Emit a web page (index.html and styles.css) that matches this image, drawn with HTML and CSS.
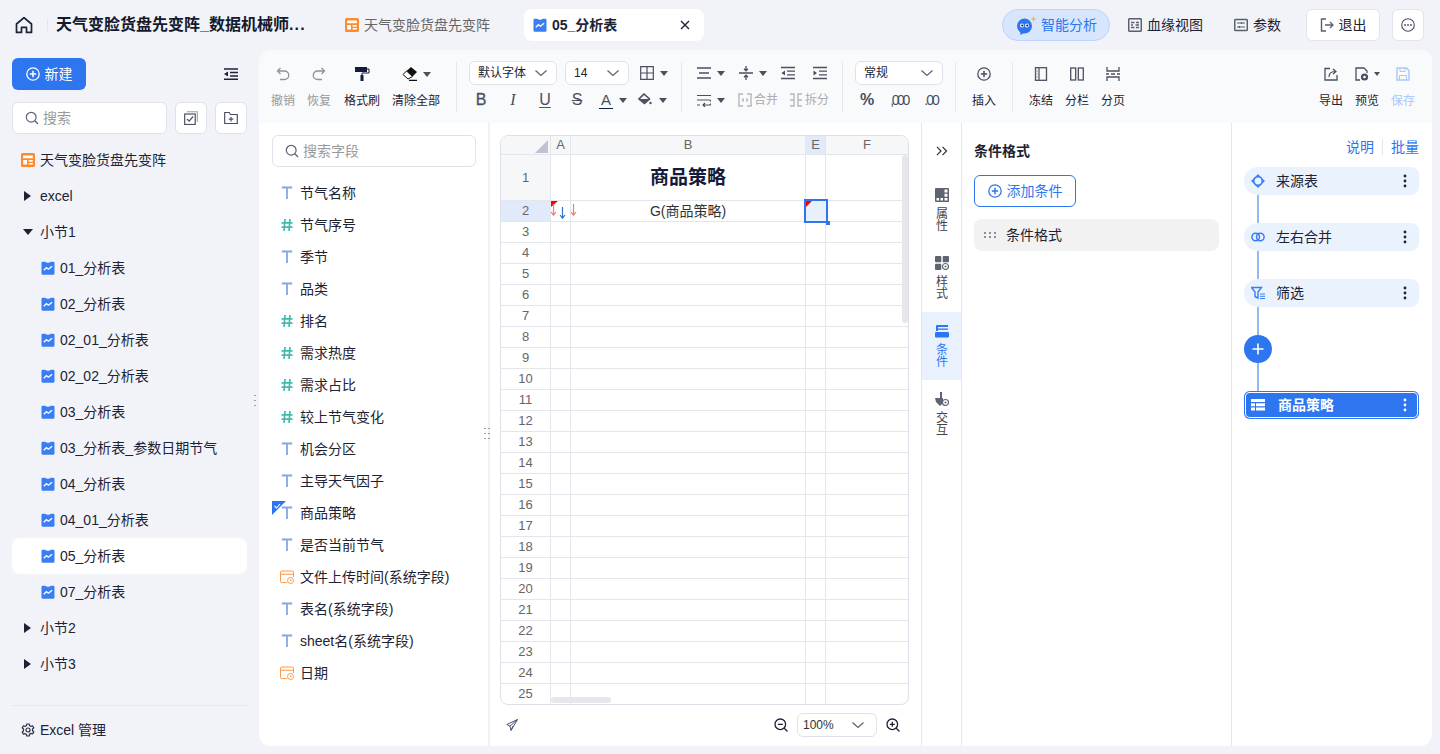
FILE: index.html
```html
<!DOCTYPE html>
<html lang="zh-CN">
<head>
<meta charset="utf-8">
<title>05_分析表</title>
<link rel="stylesheet" href="styles.css">
</head>
<body>
<svg class="defs" width="0" height="0" aria-hidden="true">
  <symbol id="i-report" viewBox="0 0 14 14"><path d="M1.800.8h2.400a3 1.300 0 0 0 5.600 0h2.400a1.300 1.300 0 0 1 1.300 1.300v10.400a1.300 1.300 0 0 1-1.300 1.300H1.800a1.300 1.300 0 0 1-1.300-1.300V2.100A1.300 1.300 0 0 1 1.800.8z" fill="#3b7df2"/><path d="M2.800 9.200l2.600-2.500 2 1.500 3.700-3" fill="none" stroke="#fff" stroke-width="1.300"/></symbol>
  <symbol id="i-pivot" viewBox="0 0 14 14"><rect width="14" height="14" rx="1.600" fill="#ff8a2b"/><path d="M2.200 2.400h9.600v2.800H2.200zM2.200 7h3.800v4.600H2.200zM7.600 7h4.200v1.700H7.600zM7.600 9.900h4.200v1.700H7.600z" fill="#fff"/></symbol>
  <symbol id="i-t" viewBox="0 0 12 14"><path d="M.8 1.500h10.400M6 1.500v11.500" fill="none" stroke="#84a7e6" stroke-width="1.800"/></symbol>
  <symbol id="i-hash" viewBox="0 0 12 14"><path d="M4 1L3 13M9 1L8 13M.5 4.800h11M.5 9.200h11" fill="none" stroke="#42bba9" stroke-width="1.700"/></symbol>
  <symbol id="i-date" viewBox="0 0 14 14"><path d="M7 12.500H1.500a1 1 0 0 1-1-1V2a1 1 0 0 1 1-1h11a1 1 0 0 1 1 1v5M.5 4.300h13" fill="none" stroke="#ff9a4a" stroke-width="1"/><circle cx="10.500" cy="10.500" r="3" fill="#fff" stroke="#ff9a4a"/><path d="M10.500 9v1.600h1.300" fill="none" stroke="#ff9a4a" stroke-width=".9"/></symbol>
  <symbol id="i-search" viewBox="0 0 14 14"><circle cx="6.200" cy="6.200" r="4.900" fill="none" stroke="#5b6272" stroke-width="1.200"/><path d="M9.800 9.800L13 13" stroke="#5b6272" stroke-width="1.300"/></symbol>
  <symbol id="i-plus" viewBox="0 0 14 14"><circle cx="7" cy="7" r="6.200" fill="none" stroke="currentColor" stroke-width="1.300"/><path d="M7 3.800v6.400M3.800 7h6.400" stroke="currentColor" stroke-width="1.500"/></symbol>
  <symbol id="i-chev" viewBox="0 0 14 8"><path d="M1.500 1.500L7 6.500l5.500-5" fill="none" stroke="#5b6272" stroke-width="1.200"/></symbol>
  <symbol id="i-dots" viewBox="0 0 4 14"><circle cx="2" cy="2" r="1.400"/><circle cx="2" cy="7" r="1.400"/><circle cx="2" cy="12" r="1.400"/></symbol>
  <symbol id="i-darrow" viewBox="0 0 7 14"><path d="M3.500 1v11M1 9l2.500 3.200L6 9" fill="none" stroke="currentColor" stroke-width="1.200"/></symbol>
</svg>

<header class="topbar">
  <svg class="home" viewBox="0 0 18 18"><path d="M1.500 8L9 1.600 16.500 8v8.400h-5v-5h-5v5h-5z" fill="none" stroke="#1c2233" stroke-width="1.700" stroke-linejoin="round"/></svg>
  <span class="top-div"></span>
  <div class="doc-title">天气变脸货盘先变阵_数据机械师<span class="dots">...</span></div>
  <div class="tab"><svg class="ic14"><use href="#i-pivot"/></svg><span>天气变脸货盘先变阵</span></div>
  <div class="tab tab-on"><svg class="ic14"><use href="#i-report"/></svg><b>05_分析表</b><svg class="tab-x" viewBox="0 0 10 10"><path d="M1 1l8 8M9 1l-8 8" stroke="#1c2233" stroke-width="1.400"/></svg></div>
  <div class="top-right">
    <div class="ai-pill">
      <svg class="ai-ic" viewBox="0 0 21 19"><circle cx="8.500" cy="10" r="7.500" fill="#2e75f0"/><path d="M4 14l.5 5 5-3z" fill="#2e75f0"/><circle cx="6" cy="9.500" r="2" fill="#fff"/><circle cx="11" cy="9.500" r="2" fill="#fff"/><circle cx="6.300" cy="9.500" r="1.100" fill="#123"/><circle cx="11.300" cy="9.500" r="1.100" fill="#123"/><path d="M17.500 0l.8 2.200 2.200.8-2.200.8-.8 2.200-.8-2.200-2.200-.8 2.200-.8z" fill="#f7b23b"/></svg>
      <span>智能分析</span>
    </div>
    <div class="top-link link-a"><svg class="ic14" viewBox="0 0 14 14"><rect x=".7" y=".7" width="12.600" height="12.600" rx="1" fill="none" stroke="#5a5f6c" stroke-width="1.500"/><path d="M3 4.500h3.500M8 4.500h3M3 7h2M7.500 7H11M3 9.500h3.500M8 9.500h3" stroke="#5a5f6c" stroke-width="1.300"/></svg><span>血缘视图</span></div>
    <div class="top-link link-b"><svg class="ic14" viewBox="0 0 14 14"><rect x=".7" y="1.500" width="12.600" height="11" rx="1" fill="none" stroke="#5a5f6c" stroke-width="1.500"/><path d="M3 5h8M3 9h8" stroke="#5a5f6c" stroke-width="1.200"/><path d="M7.500 4v2M5.500 8v2" stroke="#5a5f6c" stroke-width="1.200"/></svg><span>参数</span></div>
    <div class="exit-btn"><svg class="ic14" viewBox="0 0 14 14"><path d="M6 1H1.500v12H6" fill="none" stroke="#5a5f6c" stroke-width="1.400"/><path d="M5 7h8M10 4l3 3-3 3" fill="none" stroke="#5a5f6c" stroke-width="1.300"/></svg><span>退出</span></div>
    <div class="more-btn"><svg class="ic14" viewBox="0 0 14 14"><circle cx="7" cy="7" r="6.300" fill="none" stroke="#4a5060" stroke-width="1.100"/><circle cx="4" cy="7" r=".9" fill="#4a5060"/><circle cx="7" cy="7" r=".9" fill="#4a5060"/><circle cx="10" cy="7" r=".9" fill="#4a5060"/></svg></div>
  </div>
</header>

<div class="workspace">
  <aside class="sidebar">
    <div class="side-top">
      <button class="new-btn"><svg class="ic14"><use href="#i-plus"/></svg>新建</button>
      <svg class="collapse" viewBox="0 0 14 12"><path d="M0 1h14M6 4.500h8M6 8h8M0 11.200h14" stroke="#1c2233" stroke-width="1.500"/><path d="M4 3.500v5L0 6z" fill="#1c2233"/></svg>
    </div>
    <div class="side-search">
      <div class="search-box s-side"><svg class="ic14"><use href="#i-search"/></svg><span>搜索</span></div>
      <div class="square-btn"><svg class="ic14" viewBox="0 0 14 14"><rect x=".7" y="3" width="10.500" height="10.500" fill="none" stroke="#4a5060" stroke-width="1.200"/><path d="M3 .7h10.300V11" fill="none" stroke="#9aa0ad" stroke-width="1.100"/><path d="M3 8l2.200 2.200L9 5.500" fill="none" stroke="#4a5060" stroke-width="1.200"/></svg></div>
      <div class="square-btn"><svg class="ic14" viewBox="0 0 14 14"><path d="M.7 1.500h4.500l1.300 2h6.800v9H.7z" fill="none" stroke="#4a5060" stroke-width="1.200"/><path d="M7 6v4.500M4.800 8.200h4.500" stroke="#4a5060" stroke-width="1.200"/></svg></div>
    </div>
    <nav class="tree">
      <div class="t-row"><svg class="ic14 root-ic"><use href="#i-pivot"/></svg>天气变脸货盘先变阵</div>
      <div class="t-row"><i class="tri-r"></i>excel</div>
      <div class="t-row"><i class="tri-d"></i>小节1</div>
      <div class="t-row t-leaf"><svg class="ic14"><use href="#i-report"/></svg>01_分析表</div>
      <div class="t-row t-leaf"><svg class="ic14"><use href="#i-report"/></svg>02_分析表</div>
      <div class="t-row t-leaf"><svg class="ic14"><use href="#i-report"/></svg>02_01_分析表</div>
      <div class="t-row t-leaf"><svg class="ic14"><use href="#i-report"/></svg>02_02_分析表</div>
      <div class="t-row t-leaf"><svg class="ic14"><use href="#i-report"/></svg>03_分析表</div>
      <div class="t-row t-leaf"><svg class="ic14"><use href="#i-report"/></svg>03_分析表_参数日期节气</div>
      <div class="t-row t-leaf"><svg class="ic14"><use href="#i-report"/></svg>04_分析表</div>
      <div class="t-row t-leaf"><svg class="ic14"><use href="#i-report"/></svg>04_01_分析表</div>
      <div class="t-row t-leaf t-on"><svg class="ic14"><use href="#i-report"/></svg>05_分析表</div>
      <div class="t-row t-leaf"><svg class="ic14"><use href="#i-report"/></svg>07_分析表</div>
      <div class="t-row"><i class="tri-r"></i>小节2</div>
      <div class="t-row"><i class="tri-r"></i>小节3</div>
    </nav>
    <div class="side-foot"><svg class="ic14" viewBox="0 0 14 14"><path d="M5.800 1h2.400l.4 1.700 1.300.7 1.700-.5 1.200 2-1.300 1.200v1.600l1.300 1.200-1.200 2-1.700-.5-1.300.7L8.200 13H5.800l-.4-1.700-1.300-.7-1.700.5-1.200-2L2.500 7.900V6.100L1.200 4.900l1.200-2 1.700.5 1.300-.7z" fill="none" stroke="#2a3040" stroke-width="1.200"/><circle cx="7" cy="7" r="2" fill="none" stroke="#2a3040" stroke-width="1.200"/></svg>Excel 管理</div>
    <span class="side-grip"></span>
  </aside>

  <main class="card">
    <div class="toolbar">
      <div class="tb-tool w24 off"><svg class="tb-ic" viewBox="0 0 14 14"><path d="M4.500 1L1.500 4l3 3M1.500 4h7a4 4 0 0 1 0 8.500H4" fill="none" stroke="#8d93a0" stroke-width="1.300"/></svg><span>撤销</span></div>
      <div class="tb-tool w24 off ml12"><svg class="tb-ic" viewBox="0 0 14 14"><path d="M9.500 1l3 3-3 3M12.500 4h-7a4 4 0 0 0 0 8.500H10" fill="none" stroke="#8d93a0" stroke-width="1.300"/></svg><span>恢复</span></div>
      <div class="tb-tool w36 ml13"><svg class="tb-ic" viewBox="0 0 16 14"><path d="M1 0h12v5H1z" fill="#141b3c"/><path d="M13 2h2v4H8v2" fill="none" stroke="#141b3c"/><path d="M6.500 8h3v6h-3z" fill="#141b3c"/></svg><span>格式刷</span></div>
      <div class="tb-tool w48 ml12"><div class="tb-ic-row"><svg class="tb-ic" viewBox="0 0 16 14"><path d="M9 0l6 5-4.500 4.500-6-5.500z" fill="#111"/><path d="M4.500 4L1 7.500l5 4.500 4.500-2.500z" fill="#fff" stroke="#111"/><path d="M7 13.300h8" stroke="#111" stroke-width="1.200"/></svg><i class="caret"></i></div><span>清除全部</span></div>
      <span class="sep s16"></span>

      <div class="tb-col g-font">
        <div class="tb-line">
          <div class="select sel-font"><span>默认字体</span><svg class="sel-chev"><use href="#i-chev"/></svg></div>
          <div class="select sel-size"><span>14</span><svg class="sel-chev"><use href="#i-chev"/></svg></div>
          <div class="icn grid-ic"><svg class="ic14" viewBox="0 0 14 14"><path d="M.7.700h12.600v12.600H.7zM7 .7v12.600M.7 7h12.600" fill="none" stroke="#4a5060" stroke-width="1.200"/></svg><i class="caret"></i></div>
        </div>
        <div class="tb-line line-2">
          <span class="fmt fmt-b">B</span><span class="fmt fmt-i">I</span><span class="fmt fmt-u">U</span><span class="fmt fmt-s">S</span>
          <div class="icn col-a"><span class="a-ic">A</span><i class="caret"></i></div>
          <div class="icn col-f"><svg class="ic14" viewBox="0 0 14 14"><path d="M6 1l5.500 5-5 4.500L1 6z" fill="none" stroke="#4a5060" stroke-width="1.600"/><path d="M1.500 6h9.500L6.500 10.500z" fill="#4a5060"/><circle cx="12.500" cy="10" r="1.200" fill="#4a5060"/></svg><i class="caret"></i></div>
        </div>
      </div>
      <span class="sep s12"></span>

      <div class="tb-col g-align">
        <div class="tb-line">
          <div class="icn i-a"><svg class="ic14" viewBox="0 0 14 14"><path d="M0 2h14M2 7h10M0 12h14" stroke="#4a5060" stroke-width="1.300"/></svg><i class="caret"></i></div>
          <div class="icn i-b"><svg class="ic14" viewBox="0 0 14 14"><path d="M0 7h14M7 0v4.500M7 9.500V14M5 2.800l2 2 2-2M5 11.200l2-2 2 2" fill="none" stroke="#4a5060" stroke-width="1.300"/></svg><i class="caret"></i></div>
          <svg class="ic14 i-c" viewBox="0 0 14 14"><path d="M0 1.500h14M6 5.200h8M6 8.800h8M0 12.500h14" stroke="#4a5060" stroke-width="1.300"/><path d="M4 4.500v5L.5 7z" fill="#4a5060"/></svg>
          <svg class="ic14 i-d" viewBox="0 0 14 14"><path d="M0 1.500h14M6 5.200h8M6 8.800h8M0 12.500h14" stroke="#4a5060" stroke-width="1.300"/><path d="M.5 4.500v5L4 7z" fill="#4a5060"/></svg>
        </div>
        <div class="tb-line line-2">
          <div class="icn i-a"><svg class="ic14" viewBox="0 0 14 14"><path d="M0 2.500h14M0 7h12a2.500 2.500 0 0 1 0 5H6M8 10l-2 2 2 2M0 12h3" fill="none" stroke="#4a5060" stroke-width="1.200"/></svg><i class="caret"></i></div>
          <div class="merge m-a"><svg class="ic14" viewBox="0 0 14 14"><path d="M5 1H1v12h4M9 1h4v12H9M4 7h2M8 7h2" fill="none" stroke="#b3b7c0" stroke-width="1.400"/><path d="M5 5v4M9 5v4" stroke="#b3b7c0"/></svg><span>合并</span></div>
          <div class="merge m-b"><svg class="ic14" viewBox="0 0 14 14"><path d="M1 1h4v12H1M13 1H9v12h4M1 7h4M9 7h4" fill="none" stroke="#b3b7c0" stroke-width="1.400"/></svg><span>拆分</span></div>
        </div>
      </div>
      <span class="sep s12"></span>

      <div class="tb-col g-num">
        <div class="tb-line">
          <div class="select sel-num"><span>常规</span><svg class="sel-chev"><use href="#i-chev"/></svg></div>
        </div>
        <div class="tb-line line-2">
          <span class="num-ic big">%</span><span class="num-ic">,000</span><span class="num-ic">.00</span>
        </div>
      </div>
      <span class="sep s12"></span>

      <div class="tb-tool w24 ml4"><svg class="tb-ic" viewBox="0 0 14 14" color="#4a5060"><use href="#i-plus"/></svg><span>插入</span></div>
      <span class="sep s16"></span>

      <div class="tb-tool w24 ml4"><svg class="tb-ic" viewBox="0 0 14 14"><rect x="1.500" y=".7" width="11" height="12.600" fill="none" stroke="#4a5060" stroke-width="1.300"/><path d="M5 .7v12.600" stroke="#4a5060" stroke-width="1.200"/><path d="M1.500 4h3M1.500 7h3M1.500 10h3" stroke="#9aa0ad"/></svg><span>冻结</span></div>
      <div class="tb-tool w24 ml12"><svg class="tb-ic" viewBox="0 0 14 14"><rect x=".7" y="1" width="5" height="12" fill="none" stroke="#4a5060" stroke-width="1.300"/><rect x="8.300" y="1" width="5" height="12" fill="none" stroke="#4a5060" stroke-width="1.300"/></svg><span>分栏</span></div>
      <div class="tb-tool w24 ml12"><svg class="tb-ic" viewBox="0 0 14 14"><path d="M1 0v4h12V0M1 14v-4h12v4M0 7h3M5 7h4M11 7h3" fill="none" stroke="#4a5060" stroke-width="1.300"/></svg><span>分页</span></div>

      <div class="tb-end">
        <div class="tb-tool w24"><svg class="tb-ic" viewBox="0 0 14 14"><path d="M6 1.500H1v11.500h12V8" fill="none" stroke="#4a5060" stroke-width="1.300"/><path d="M5 10c0-4 2-5.500 6-5.500M9 2l3 2.500L9 7" fill="none" stroke="#4a5060" stroke-width="1.200"/></svg><span>导出</span></div>
        <div class="tb-tool w24 ml12"><div class="tb-ic-row tight"><svg class="tb-ic" viewBox="0 0 14 14"><path d="M5 13H1V1h8l3 3v2" fill="none" stroke="#4a5060" stroke-width="1.300"/><circle cx="9.500" cy="10" r="3.600" fill="#4a5060"/><circle cx="9.500" cy="10" r="1.300" fill="#fff"/></svg><i class="caret small"></i></div><span>预览</span></div>
        <div class="tb-tool w24 ml12 save"><svg class="tb-ic" viewBox="0 0 14 14"><path d="M1 1h9.500L13 3.500V13H1z" fill="none" stroke="#a9c6f7" stroke-width="1.400"/><path d="M4 1v3.500h5V1M3.500 13V8.500h7V13" fill="none" stroke="#a9c6f7"/></svg><span>保存</span></div>
      </div>
    </div>

    <div class="content">
      <section class="fields">
        <div class="search-box s-field"><svg class="ic14"><use href="#i-search"/></svg><span>搜索字段</span></div>
        <ul class="f-list">
          <li><svg class="f-ic"><use href="#i-t"/></svg>节气名称</li>
          <li><svg class="f-ic"><use href="#i-hash"/></svg>节气序号</li>
          <li><svg class="f-ic"><use href="#i-t"/></svg>季节</li>
          <li><svg class="f-ic"><use href="#i-t"/></svg>品类</li>
          <li><svg class="f-ic"><use href="#i-hash"/></svg>排名</li>
          <li><svg class="f-ic"><use href="#i-hash"/></svg>需求热度</li>
          <li><svg class="f-ic"><use href="#i-hash"/></svg>需求占比</li>
          <li><svg class="f-ic"><use href="#i-hash"/></svg>较上节气变化</li>
          <li><svg class="f-ic"><use href="#i-t"/></svg>机会分区</li>
          <li><svg class="f-ic"><use href="#i-t"/></svg>主导天气因子</li>
          <li class="f-used"><svg class="used-mark" viewBox="0 0 14 14"><path d="M0 0h14L0 14z" fill="#2e75f0"/><path d="M2.500 5l2 2 3.500-4" fill="none" stroke="#fff" stroke-width="1.100"/></svg><svg class="f-ic"><use href="#i-t"/></svg>商品策略</li>
          <li><svg class="f-ic"><use href="#i-t"/></svg>是否当前节气</li>
          <li><svg class="f-ic d"><use href="#i-date"/></svg>文件上传时间(系统字段)</li>
          <li><svg class="f-ic"><use href="#i-t"/></svg>表名(系统字段)</li>
          <li><svg class="f-ic"><use href="#i-t"/></svg>sheet名(系统字段)</li>
          <li><svg class="f-ic d"><use href="#i-date"/></svg>日期</li>
        </ul>
        <span class="field-grip"></span>
      </section>

      <section class="sheet-area">
        <div class="sheet">
          <table class="tbl">
            <colgroup><col class="c-h"><col class="c-a"><col class="c-b"><col class="c-e"><col class="c-f"></colgroup>
            <tr class="r-head"><th class="corner"><i class="corner-tri"></i></th><th>A</th><th>B</th><th class="hl">E</th><th>F</th></tr>
            <tr class="r-one"><th class="rh">1</th><td></td><td class="title-cell">商品策略</td><td></td><td></td></tr>
            <tr><th class="hl">2</th><td class="rel"><i class="flag"></i><svg class="arr a1"><use href="#i-darrow"/></svg><svg class="arr a2"><use href="#i-darrow"/></svg></td><td class="rel center"><svg class="arr a3"><use href="#i-darrow"/></svg>G(商品策略)</td><td class="rel"><div class="sel-cell"><i class="flag2"></i><i class="handle"></i></div></td><td></td></tr>
            <tr><th>3</th><td></td><td></td><td></td><td></td></tr>
            <tr><th>4</th><td></td><td></td><td></td><td></td></tr>
            <tr><th>5</th><td></td><td></td><td></td><td></td></tr>
            <tr><th>6</th><td></td><td></td><td></td><td></td></tr>
            <tr><th>7</th><td></td><td></td><td></td><td></td></tr>
            <tr><th>8</th><td></td><td></td><td></td><td></td></tr>
            <tr><th>9</th><td></td><td></td><td></td><td></td></tr>
            <tr><th>10</th><td></td><td></td><td></td><td></td></tr>
            <tr><th>11</th><td></td><td></td><td></td><td></td></tr>
            <tr><th>12</th><td></td><td></td><td></td><td></td></tr>
            <tr><th>13</th><td></td><td></td><td></td><td></td></tr>
            <tr><th>14</th><td></td><td></td><td></td><td></td></tr>
            <tr><th>15</th><td></td><td></td><td></td><td></td></tr>
            <tr><th>16</th><td></td><td></td><td></td><td></td></tr>
            <tr><th>17</th><td></td><td></td><td></td><td></td></tr>
            <tr><th>18</th><td></td><td></td><td></td><td></td></tr>
            <tr><th>19</th><td></td><td></td><td></td><td></td></tr>
            <tr><th>20</th><td></td><td></td><td></td><td></td></tr>
            <tr><th>21</th><td></td><td></td><td></td><td></td></tr>
            <tr><th>22</th><td></td><td></td><td></td><td></td></tr>
            <tr><th>23</th><td></td><td></td><td></td><td></td></tr>
            <tr><th>24</th><td></td><td></td><td></td><td></td></tr>
            <tr><th>25</th><td></td><td></td><td></td><td></td></tr>
          </table>
          <i class="scroll-v"></i>
          <i class="scroll-h"></i>
        </div>
        <div class="zoombar">
          <svg class="plane" viewBox="0 0 12 12"><path d="M11.500.5L.8 5.500l3.200 1.600L5 11.500zM11.500.5L4 7.100M5 11.500L7 7" fill="none" stroke="#4a5274" stroke-width="1"/></svg>
          <svg class="ic14 z-out" viewBox="0 0 14 14"><circle cx="6.300" cy="6.300" r="5.300" fill="none" stroke="#1c2233" stroke-width="1.300"/><path d="M10 10l3.500 3.500M3.800 6.300h5" stroke="#1c2233" stroke-width="1.300"/></svg>
          <div class="select sel-zoom"><span>100%</span><svg class="sel-chev"><use href="#i-chev"/></svg></div>
          <svg class="ic14 z-in" viewBox="0 0 14 14"><circle cx="6.300" cy="6.300" r="5.300" fill="none" stroke="#1c2233" stroke-width="1.300"/><path d="M10 10l3.500 3.500M3.800 6.300h5M6.300 3.800v5" stroke="#1c2233" stroke-width="1.300"/></svg>
        </div>
      </section>

      <nav class="vtabs">
        <div class="v-collapse"><svg viewBox="0 0 12 10" class="v-chev"><path d="M1 .8L5 5 1 9.200M6.500.8L10.500 5l-4 4.200" fill="none" stroke="#2a3040" stroke-width="1.200"/></svg></div>
        <div class="v-tab"><svg class="ic14" viewBox="0 0 14 14"><rect width="14" height="14" rx="1" fill="#5f6471"/><path d="M9.500 1.500h3v3h-3zM9.500 5.800h3v3h-3zM1.500 10h2.500v2.500H1.500zM5.500 10h2.500v2.500H5.500zM9.500 10h3v2.500h-3z" fill="#fff"/></svg><span>属性</span></div>
        <div class="v-tab"><svg class="ic14" viewBox="0 0 14 14"><rect width="6.300" height="6.300" rx="1" fill="#5f6471"/><rect x="7.700" width="6.300" height="6.300" rx="1" fill="#5f6471"/><rect y="7.700" width="6.300" height="6.300" rx="1" fill="#5f6471"/><circle cx="10.500" cy="10.500" r="3" fill="#fff" stroke="#5f6471" stroke-width="1.200"/><circle cx="10.500" cy="10.500" r="1" fill="#5f6471"/></svg><span>样式</span></div>
        <div class="v-tab v-on"><svg class="ic14" viewBox="0 0 14 14"><path d="M6 1H2a1 1 0 0 0-1 1v5h2V3h10V1z" fill="#2e75f0"/><rect x="3" y="4.500" width="10" height="1.300" fill="#2e75f0"/><rect x="0" y="8" width="14" height="5.500" rx="1.200" fill="#2e75f0"/></svg><span>条件</span></div>
        <div class="v-tab"><svg class="ic14" viewBox="0 0 14 14"><path d="M5 0h2v6h-2zM0 6h8v5l-3 3-4-4z" fill="#5f6471"/><circle cx="10.500" cy="10.500" r="3" fill="#fff" stroke="#5f6471" stroke-width="1.100"/><circle cx="10.500" cy="10.500" r="1" fill="#5f6471"/></svg><span>交互</span></div>
      </nav>

      <section class="cond">
        <h3 class="cond-title">条件格式</h3>
        <button class="add-cond"><svg class="ic14"><use href="#i-plus"/></svg>添加条件</button>
        <div class="cond-row"><svg class="grip" viewBox="0 0 12 6"><path d="M0 0h2v2H0zM5 0h2v2H5zM10 0h2v2h-2zM0 4h2v2H0zM5 4h2v2H5zM10 4h2v2h-2z" fill="#8b909c"/></svg>条件格式</div>
      </section>

      <section class="flow">
        <div class="flow-links"><span>说明</span><i></i><span>批量</span></div>
        <div class="node"><svg class="ic14 n-ic" viewBox="0 0 14 14"><circle cx="7" cy="7" r="4.300" fill="none" stroke="#3b7df2" stroke-width="1.700"/><path d="M7 0l2.500 2.800h-5zM7 14l2.500-2.800h-5zM0 7l2.800-2.500v5zM14 7l-2.800-2.500v5z" fill="#3b7df2"/></svg><span>来源表</span><svg class="n-more"><use href="#i-dots"/></svg></div>
        <i class="link"></i>
        <div class="node"><svg class="ic14 n-ic" viewBox="0 0 14 14"><circle cx="4.700" cy="7" r="3.800" fill="none" stroke="#3b7df2" stroke-width="1.500"/><circle cx="9.300" cy="7" r="3.800" fill="none" stroke="#3b7df2" stroke-width="1.500"/></svg><span>左右合并</span><svg class="n-more"><use href="#i-dots"/></svg></div>
        <i class="link"></i>
        <div class="node"><svg class="ic14 n-ic" viewBox="0 0 14 14"><path d="M.5 1.500h10L7 6v6l-3-1.500V6z" fill="none" stroke="#3b7df2" stroke-width="1.400"/><path d="M9 8h5M9 10.300h5M9 12.500h5" stroke="#3b7df2"/></svg><span>筛选</span><svg class="n-more"><use href="#i-dots"/></svg></div>
        <i class="link"></i>
        <div class="add-node"><svg viewBox="0 0 12 12" class="add-plus"><path d="M6 .5v11M.5 6h11" stroke="#fff" stroke-width="1.600"/></svg></div>
        <i class="link"></i>
        <div class="node node-on"><svg class="ic14 n-ic" viewBox="0 0 14 14"><path d="M0 1h14v3H0zM0 5.200h4v3H0zM5 5.200h9v3H5zM0 9.400h4v3H0zM5 9.400h9v3H5z" fill="#fff"/></svg><span>商品策略</span><svg class="n-more"><use href="#i-dots"/></svg></div>
      </section>
    </div>
  </main>
</div>
</body>
</html>
```

FILE: styles.css
```css
* { box-sizing: border-box; }
html, body { margin: 0; height: 100%; }
body {
  width: 1440px; height: 754px; overflow: hidden;
  background: #f1f3f9; color: #1d2333;
  font: 14px/20px "Liberation Sans", "Noto Sans CJK SC", sans-serif;
  display: flex; flex-direction: column;
}
.defs { position: absolute; }
svg { display: block; flex: none; }
i { display: block; }
.ic14 { width: 14px; height: 14px; }

/* top bar */
.topbar { height: 50px; flex: none; display: flex; align-items: center; padding: 0 16px 0 15px; }
.home { width: 18px; height: 18px; }
.top-div { width: 1px; height: 12px; background: #e3e5ec; margin-left: 14px; }
.doc-title { width: 280px; margin-left: 8px; font-size: 16px; font-weight: 700; white-space: nowrap; color: #14192b; }
.dots { letter-spacing: 1.200px; }
.tab { width: 180px; height: 32px; padding-left: 9px; display: flex; align-items: center; gap: 5px; color: #666; border-radius: 8px; }
.tab-on { margin-left: 8px; background: #fff; color: #1d2333; position: relative; }
.tab-on b { font-weight: 700; }
.tab-x { width: 10px; height: 10px; margin-left: auto; margin-right: 14px; }
.top-right { margin-left: auto; display: flex; align-items: center; }
.ai-pill { width: 108px; height: 32px; border-radius: 16px; background: #d8e6fd; border: 1px solid #bcd4fb; color: #2e75f0; display: flex; align-items: center; padding-left: 13px; gap: 4px; }
.ai-ic { width: 21px; height: 19px; }
.top-link { display: flex; align-items: center; gap: 5px; }
.link-a { margin-left: 18px; }
.link-b { margin-left: 31px; }
.exit-btn { margin-left: 25px; width: 74px; height: 32px; background: #fff; border: 1px solid #e1e4ec; border-radius: 6px; display: flex; align-items: center; justify-content: center; gap: 5px; }
.more-btn { margin-left: 12px; width: 32px; height: 32px; background: #fff; border: 1px solid #e1e4ec; border-radius: 6px; display: flex; align-items: center; justify-content: center; }

/* layout */
.workspace { flex: 1; display: flex; min-height: 0; }
.sidebar { width: 259px; flex: none; padding: 8px 12px 0; position: relative; display: flex; flex-direction: column; height: 704px; }
.card { width: 1173px; height: 696px; background: #fff; border-radius: 12px; overflow: hidden; display: flex; flex-direction: column; }

/* sidebar */
.side-top { display: flex; align-items: center; justify-content: space-between; padding-right: 9px; }
.new-btn { width: 74px; height: 32px; border: 0; border-radius: 6px; background: #2e75f0; color: #fff; font: inherit; display: flex; align-items: center; justify-content: center; gap: 5px; padding: 0; }
.collapse { width: 14px; height: 12px; }
.side-search { display: flex; gap: 8px; margin-top: 12px; }
.search-box { height: 32px; background: #fff; border: 1px solid #dfe2ea; border-radius: 6px; display: flex; align-items: center; gap: 4px; padding-left: 12px; color: #999; }
.s-side { width: 155px; }
.square-btn { width: 32px; height: 32px; background: #fff; border: 1px solid #dfe2ea; border-radius: 6px; display: flex; align-items: center; justify-content: center; }
.tree { margin-top: 8px; }
.t-row { height: 36px; display: flex; align-items: center; padding-left: 28px; position: relative; border-radius: 8px; white-space: nowrap; }
.t-row .root-ic { position: absolute; left: 9px; top: 11px; }
.t-leaf { padding-left: 29px; gap: 5px; }
.t-on { background: #fff; }
.tri-r { position: absolute; left: 12px; top: 13px; border-left: 7px solid #1c2233; border-top: 5px solid transparent; border-bottom: 5px solid transparent; }
.tri-d { position: absolute; left: 11px; top: 15px; border-top: 6px solid #1c2233; border-left: 5px solid transparent; border-right: 5px solid transparent; }
.side-foot { position: absolute; left: 12px; right: 12px; top: 655px; height: 49px; border-top: 1px solid #e6e8ee; display: flex; align-items: center; gap: 5px; padding-left: 9px; }
.side-grip { position: absolute; left: 254px; top: 343px; width: 2px; height: 14px; background: radial-gradient(circle, #9aa0ad 1px, transparent 1px) 0 0 / 2px 5px repeat-y; }

/* toolbar */
.toolbar { height: 73px; flex: none; background: #f9fafc; padding: 12px 17px 0 12px; display: flex; align-items: flex-start; }
.tb-tool { display: flex; flex-direction: column; align-items: center; font-size: 12px; line-height: 16px; white-space: nowrap; }
.tb-tool > span { margin-top: 6px; }
.tb-ic { width: 16px; height: 14px; margin-top: 5px; margin-bottom: 6px; }
.tb-ic-row { display: flex; align-items: center; gap: 5px; height: 25px; padding-bottom: 1px; }
.tb-ic-row .tb-ic { margin: 0; }
.tb-ic-row.tight { gap: 4px; }
.w24 { width: 24px; } .w36 { width: 36px; } .w48 { width: 48px; }
.ml4 { margin-left: 4px; } .ml12 { margin-left: 12px; } .ml13 { margin-left: 13px; }
.off { color: #999; }
.save { color: #a9c6f7; }
.caret { border-top: 5px solid #4a5060; border-left: 4px solid transparent; border-right: 4px solid transparent; }
.caret.small { border-top-width: 4px; border-left-width: 3px; border-right-width: 3px; }
.sep { width: 1px; height: 50px; background: #e6e8ee; flex: none; }
.s16 { margin: 0 12px 0 16px; }
.s12 { margin: 0 12px; }
.tb-col { display: flex; flex-direction: column; }
.g-font { width: 200px; }
.g-align { width: 133px; margin-left: 3px; }
.g-num { width: 88px; }
.tb-line { display: flex; align-items: center; height: 24px; margin-top: -1px; }
.tb-line.line-2 { margin-top: 3px; }
.select { height: 24px; background: #fff; border: 1px solid #dfe2ea; border-radius: 6px; display: flex; align-items: center; justify-content: space-between; padding: 0 8px; font-size: 12px; }
.sel-chev { width: 14px; height: 8px; }
.sel-font { width: 88px; }
.sel-size { width: 64px; margin-left: 8px; }
.sel-num { width: 88px; }
.icn { display: flex; align-items: center; gap: 6px; }
.grid-ic { margin-left: 11px; }
.fmt { width: 24px; text-align: center; font-size: 16px; color: #4a5060; margin-right: 8px; }
.fmt-b { font-weight: 400; -webkit-text-stroke: .3px #4a5060; }
.fmt-i { font-style: italic; font-family: "Liberation Serif", serif; }
.fmt-u { text-decoration: underline; text-underline-offset: 2px; }
.fmt-s { text-decoration: line-through; margin-right: 0; }
.col-a { margin-left: 10px; }
.a-ic { width: 14px; text-align: center; font-size: 15px; line-height: 16px; border-bottom: 1.500px solid #141b3c; color: #4a5060; }
.col-f { margin-left: 11px; gap: 7px; }
.g-align .i-b { margin-left: 14px; }
.g-align .i-c { margin-left: 14px; }
.g-align .i-d { margin-left: 18px; }
.merge { display: flex; align-items: center; gap: 2px; font-size: 12px; color: #aaa; }
.m-a { margin-left: 13px; }
.m-b { margin-left: 11px; }
.num-ic { width: 24px; margin-right: 8px; text-align: center; font-size: 14px; color: #4a5060; letter-spacing: -2.400px; white-space: nowrap; }
.num-ic:last-child { margin-right: 0; letter-spacing: -2px; }
.num-ic.big { font-size: 16px; font-weight: 700; letter-spacing: 0; }
.tb-end { margin-left: auto; display: flex; }

/* content */
.content { flex: 1; display: flex; min-height: 0; }
.fields { width: 231px; flex: none; border-right: 2px solid #f0f1f5; padding: 12px 12px 0 13px; position: relative; }
.s-field { width: 204px; }
.f-list { list-style: none; margin: 10px 0 0; padding: 0; }
.f-list li { height: 32px; display: flex; align-items: center; gap: 7px; padding-left: 9px; position: relative; white-space: nowrap; }
.f-ic { width: 12px; height: 14px; }
.f-ic.d { width: 14px; height: 14px; margin-left: -1px; }
.f-list .f-ic.d { margin-right: -1px; }
.used-mark { position: absolute; left: 0; top: 4px; width: 14px; height: 14px; }
.field-grip { position: absolute; right: -3px; top: 303px; width: 8px; height: 14px; background: radial-gradient(circle, #9aa0ad 1px, transparent 1px) 0 0 / 4px 5px; }

.sheet-area { width: 431px; flex: none; padding: 12px 12px 0 10px; }
.sheet { width: 409px; height: 570px; border: 1px solid #dde0e8; border-radius: 8px; overflow: hidden; position: relative; }
.tbl { border-collapse: separate; border-spacing: 0; table-layout: fixed; width: 407px; font-size: 13px; line-height: 14px; }
.c-h { width: 50px; } .c-a { width: 20px; } .c-b { width: 235px; } .c-e { width: 20px; } .c-f { width: 82px; }
.tbl th, .tbl td { padding: 0; height: 21px; border-right: 1px solid #e4e6eb; border-bottom: 1px solid #e4e6eb; font-weight: 400; color: #666; text-align: center; }
.tbl tr > :last-child { border-right: 0; }
.r-head th { height: 19px; background: #f6f7f9; }
.r-one th, .r-one td { height: 46px; }
.r-one .rh { background: #f6f7f9; }
.tbl .hl { background: #e0eafa; }
.corner { position: relative; }
.corner-tri { position: absolute; right: 2px; bottom: 1px; width: 0; height: 0; border-left: 13px solid transparent; border-bottom: 13px solid #bfc3cf; }
.tbl .title-cell { font-size: 19px; font-weight: 700; color: #141b3c; }
.tbl .center { color: #333; font-size: 14px; }
.rel { position: relative; }
.flag { position: absolute; left: 0; top: 0; border-top: 6px solid #f00; border-right: 7px solid transparent; }
.arr { position: absolute; top: 2px; width: 7px; height: 14px; }
.a1 { left: -1px; color: #f47b7b; }
.a2 { left: 8px; color: #2e75c8; top: 5px; }
.a3 { left: -1px; color: #f47b7b; }
.sel-cell { position: absolute; left: -2px; top: -2px; width: 24px; height: 24px; border: 2px solid #2e75f0; background: #e8f0fc; }
.flag2 { position: absolute; left: 0; top: 0; border-top: 6px solid #f00; border-right: 6px solid transparent; }
.handle { position: absolute; right: -4px; bottom: -4px; width: 4px; height: 4px; background: #2e75f0; }
.scroll-v { position: absolute; right: 0; top: 19px; width: 6px; height: 168px; background: #e6e7ea; border-radius: 3px; }
.scroll-h { position: absolute; left: 50px; bottom: 1px; width: 60px; height: 6px; background: #e6e7ea; border-radius: 3px; }
.zoombar { display: flex; align-items: center; padding: 8px 9px 0 6px; }
.plane { width: 12px; height: 12px; margin-right: auto; }
.select.sel-zoom { width: 80px; margin: 0 9px; padding: 0 11px 0 5px; color: #333; font-size: 12px; }

.vtabs { width: 41px; flex: none; border-left: 1px solid #e6e7ea; border-right: 1px solid #e6e7ea; }
.v-collapse { height: 53px; display: flex; align-items: center; justify-content: center; padding-top: 3px; }
.v-chev { width: 12px; height: 10px; }
.v-tab { height: 68px; padding-top: 12px; display: flex; flex-direction: column; align-items: center; font-size: 12px; line-height: 12px; color: #444; }
.v-tab span { width: 12px; margin: 6px 0 0 1px; display: block; }
.v-on { background: #e8f1fd; color: #2e75f0; }

.cond { width: 270px; flex: none; border-right: 1px solid #e6e7ea; padding: 18px 12px 0; }
.cond-title { margin: 0; font-size: 14px; line-height: 20px; font-weight: 700; color: #1d2333; }
.add-cond { width: 102px; height: 32px; margin-top: 14px; border: 1px solid #2e75f0; border-radius: 6px; background: #fff; color: #2e75f0; font: inherit; display: flex; align-items: center; justify-content: center; gap: 5px; padding: 0; }
.cond-row { height: 32px; margin-top: 12px; background: #f2f2f2; border-radius: 8px; display: flex; align-items: center; gap: 10px; padding-left: 10px; }
.grip { width: 12px; height: 6px; }

.flow { width: 200px; flex: none; padding: 14px 13px 0 12px; }
.flow-links { height: 20px; margin-bottom: 10px; display: flex; justify-content: flex-end; align-items: center; gap: 8px; color: #2e75f0; }
.flow-links i { width: 1px; height: 16px; background: #e6e7ea; }
.node { height: 28px; border-radius: 14px 8px 8px 14px; background: #eaf2fd; display: flex; align-items: center; padding-left: 7px; }
.node span { margin-left: 11px; }
.n-more { width: 4px; height: 14px; margin-left: auto; margin-right: 12px; fill: #1c2233; }
.link { width: 2px; height: 28px; margin-left: 13px; background: #92b8f5; }
.add-node { width: 28px; height: 28px; border-radius: 50%; background: #2e75f0; display: flex; align-items: center; justify-content: center; }
.add-plus { width: 12px; height: 12px; }
.node-on { background: #2e75f0; color: #fff; font-weight: 700; border-radius: 6px; box-shadow: inset 0 0 0 1px #2e75f0, inset 0 0 0 2px #fff; }
.node-on span { margin-left: 13px; }
.node-on .n-more { fill: #fff; }
```
